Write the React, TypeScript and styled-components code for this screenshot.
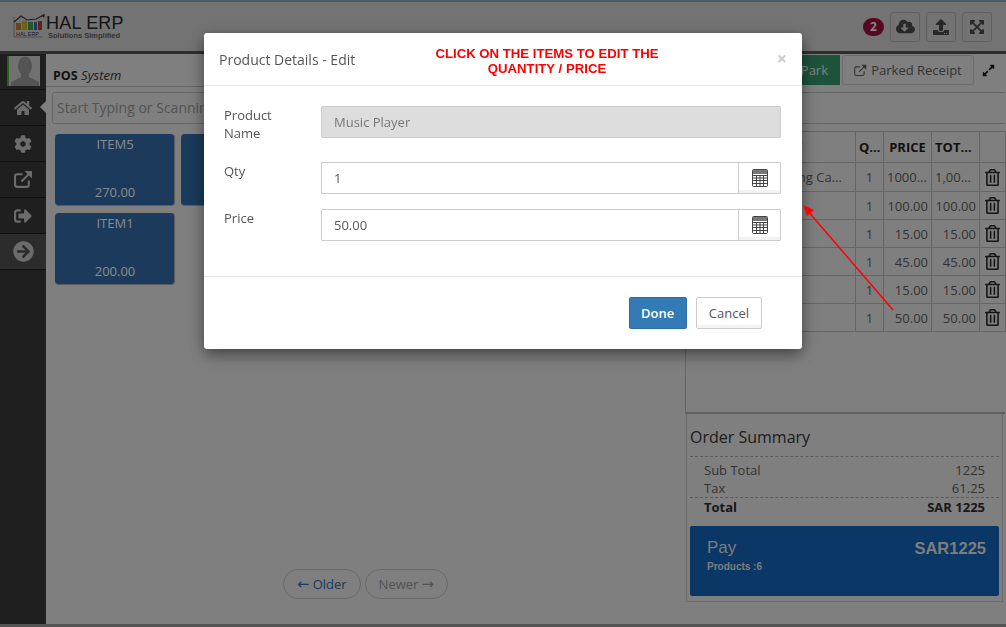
import React from 'react'
import styled, { createGlobalStyle } from 'styled-components'
import {
  FaHome,
  FaCog,
  FaSignOutAlt,
  FaArrowCircleRight,
  FaCloudDownloadAlt,
  FaUpload,
  FaExpandArrowsAlt,
  FaExpandAlt,
  FaRegTrashAlt,
} from 'react-icons/fa'

const GlobalStyle = createGlobalStyle`
  html, body {
    margin: 0;
    padding: 0;
    overflow: hidden;
  }
  body {
    font-family: "Open Sans", "Liberation Sans", sans-serif;
    font-size: 13px;
    color: #555;
    background: #d4d4d4;
  }
  * {
    box-sizing: border-box;
  }
`

const Page = styled.div`
  width: 1006px;
  height: 627px;
  display: flex;
  flex-direction: column;
  border-top: 2px solid #7a9aaa;
  border-bottom: 3px solid #8c8c8c;
`

const Header = styled.header`
  height: 52px;
  flex: none;
  display: flex;
  align-items: center;
  padding: 0 14px 0 13px;
  border-bottom: 3px solid #4c4c4c;
  background: #c0c0c0;
`

const Logo = styled.div`
  display: flex;
  align-items: flex-start;
`

const LogoText = styled.div`
  display: flex;
  flex-direction: column;
  font-family: "Liberation Sans", sans-serif;
  color: #222;
`

const LogoName = styled.span`
  font-size: 18px;
  line-height: 18px;
  letter-spacing: 0.2px;
`

const LogoTag = styled.span`
  font-size: 7.5px;
  line-height: 8px;
  font-weight: 700;
  margin-left: 2px;
  color: #555;
`

const HeaderActions = styled.div`
  margin-left: auto;
  display: flex;
  align-items: center;
  gap: 6px;
`

const Badge = styled.span`
  width: 21px;
  height: 18px;
  border-radius: 9px;
  background: #8e1038;
  color: #ddd;
  font-size: 12px;
  font-weight: 700;
  line-height: 18px;
  text-align: center;
`

const HeaderButton = styled.div`
  width: 30px;
  height: 30px;
  display: flex;
  align-items: center;
  justify-content: center;
  border: 1px solid #a0a0a0;
  border-radius: 3px;
  color: #444;
  font-size: ${({ $size }: { $size?: number }) => $size ?? 16}px;
`

const Body = styled.div`
  flex: 1;
  min-height: 0;
  display: flex;
`

const Sidebar = styled.nav`
  width: 46px;
  flex: none;
  background: #343434;
`

const AvatarBox = styled.div`
  height: 36px;
  padding: 2px 6px 0 7px;
  border-bottom: 1px solid #1c1c1c;
`

const Avatar = styled.div`
  width: 33px;
  height: 30px;
  border-left: 2px solid #3fa52a;
  background: #bdbdbd;
  overflow: hidden;
  svg {
    display: block;
  }
`

const NavItem = styled.div<{ $active?: boolean; $light?: boolean }>`
  position: relative;
  height: 36px;
  display: flex;
  align-items: center;
  justify-content: center;
  font-size: 18px;
  color: #b4b4b4;
  background: ${({ $light }) => ($light ? '#4a4a4a' : 'transparent')};
  border-bottom: 1px solid #1c1c1c;
  &::after {
    content: '';
    display: ${({ $active }) => ($active ? 'block' : 'none')};
    position: absolute;
    right: 0;
    top: 11px;
    border: 6px solid transparent;
    border-right-color: #d4d4d4;
    border-left-width: 0;
  }
`

const Main = styled.main`
  flex: 1;
  min-width: 0;
  display: flex;
  flex-direction: column;
  padding-bottom: 25px;
`

const MainTitle = styled.div`
  height: 33px;
  padding: 12px 0 0 7px;
  border-bottom: 1px solid #aaa;
  line-height: 18px;
  color: #333;
  b {
    font-size: 12.5px;
    color: #1c1c1c;
  }
  i {
    font-size: 13px;
  }
`

const SearchBox = styled.div`
  height: 32px;
  margin: 5px 6px 0;
  padding: 0 4px;
  border: 1px solid #aaa;
  border-radius: 3px;
  font-size: 14px;
  line-height: 30px;
  color: #8a8a8a;
  white-space: nowrap;
  overflow: hidden;
`

const Tiles = styled.div`
  width: 252px;
  margin: 10px 0 0 9px;
  display: flex;
  flex-wrap: wrap;
  gap: 7px 6px;
`

const Tile = styled.div`
  width: 120px;
  height: 72px;
  padding: 1px 3px 4px 4px;
  display: flex;
  flex-direction: column;
  justify-content: space-between;
  border-radius: 4px;
  border: 1px solid #9a9a9a;
  border-width: 0 1px 1px 0;
  background: #2d6199;
  color: #e4e4e4;
  text-align: center;
  line-height: 18px;
`

const Pager = styled.div`
  margin-top: auto;
  display: flex;
  justify-content: center;
  gap: 4px;
`

const PagerLink = styled.span<{ $disabled?: boolean }>`
  height: 30px;
  padding: 0 13px;
  border: 1px solid #b0b0b0;
  border-radius: 15px;
  line-height: 28px;
  white-space: nowrap;
  color: ${({ $disabled }) => ($disabled ? '#888' : '#2d6199')};
`

const PagerArrow = styled.span`
  font-family: "DejaVu Sans", sans-serif;
  font-size: 14.5px;
`

const Side = styled.aside`
  width: 320px;
  flex: none;
  margin-right: 1px;
  display: flex;
  flex-direction: column;
`

const SideActions = styled.div`
  height: 32px;
  flex: none;
  padding-top: 1px;
  display: flex;
  align-items: flex-start;
`

const ParkButton = styled.div`
  width: 155px;
  flex: none;
  height: 30px;
  padding-right: 12px;
  background: #2f8a62;
  color: #d8d8d8;
  text-align: right;
  line-height: 30px;
`

const ParkedButton = styled.div`
  width: 132px;
  flex: none;
  height: 30px;
  margin-left: 2px;
  display: flex;
  align-items: center;
  justify-content: center;
  gap: 4px;
  border: 1px solid #b4b4b4;
  border-radius: 3px;
  color: #555;
`

const ExpandButton = styled.div`
  flex: 1;
  height: 30px;
  padding-right: 2px;
  display: flex;
  align-items: center;
  justify-content: center;
  font-size: 13px;
  color: #111;
`

const CustomerBox = styled.div`
  height: 32px;
  flex: none;
  margin-top: 6px;
  border: 1px solid #aaa;
  border-width: 1px 0;
`

const ItemsPanel = styled.div`
  flex: 1;
  margin-top: 7px;
  border-left: 1px solid #a8a8a8;
  border-bottom: 2px solid #a0a0a0;
`

const ItemsTable = styled.table`
  width: 100%;
  table-layout: fixed;
  border-collapse: collapse;
`

const HeadCell = styled.th`
  height: 31px;
  padding: 0 3px;
  border: 1px solid #a8a8a8;
  color: #1c1c1c;
  font-size: 13px;
  font-weight: 700;
  white-space: nowrap;
  overflow: hidden;
  text-overflow: ellipsis;
`

const Cell = styled.td<{ $align?: string }>`
  height: 28px;
  padding: 0 3px;
  border: 1px solid #a8a8a8;
  text-align: ${({ $align }) => $align ?? 'right'};
  white-space: nowrap;
  overflow: hidden;
  text-overflow: ellipsis;
  tr:first-child > & {
    height: 29px;
  }
  svg {
    display: block;
    margin: 0 auto;
    color: #222;
    font-size: 17px;
  }
`

const Summary = styled.section`
  height: 188px;
  flex: none;
  margin: 0 2px 22px 1px;
  padding: 0 3px;
  border: 1px solid #b4b4b4;
  border-top: 0;
  display: flex;
  flex-direction: column;
`

const SummaryTitle = styled.h3`
  margin: 0 0 4px;
  height: 43px;
  padding-top: 12px;
  font-size: 16px;
  line-height: 22px;
  font-weight: 400;
  color: #333;
  border-bottom: 1px dashed #999;
`

const SummaryRow = styled.div<{ $total?: boolean }>`
  height: ${({ $total }) => ($total ? 19 : 18)}px;
  padding: 0 14px;
  display: flex;
  justify-content: space-between;
  line-height: 18px;
  font-weight: ${({ $total }) => ($total ? 700 : 400)};
  color: ${({ $total }) => ($total ? '#2a2a2a' : '#555')};
  border-top: ${({ $total }) => ($total ? '1px dashed #999' : '0')};
`

const PayButton = styled.div`
  height: 70px;
  margin-top: 10px;
  padding: 10px 13px 0 17px;
  border-radius: 2px;
  background: #115ca8;
  color: #d0d0d0;
  font-family: "Liberation Sans", sans-serif;
`

const PayTop = styled.div`
  display: flex;
  justify-content: space-between;
  font-size: 17px;
  line-height: 24px;
  b {
    font-size: 16.5px;
  }
`

const PayCount = styled.div`
  margin-top: 1px;
  font-size: 10px;
  font-weight: 700;
  line-height: 12px;
`

const Backdrop = styled.div`
  position: fixed;
  inset: 0;
  background: rgba(0, 0, 0, 0.4);
`

const Modal = styled.div`
  position: relative;
  width: 598px;
  height: 316px;
  margin: 33px auto 0;
  border-radius: 3px;
  background: #fff;
  box-shadow: 0 5px 15px rgba(0, 0, 0, 0.5);
  color: #555;
`

const ModalHeader = styled.div`
  height: 53px;
  padding: 0 15px;
  display: flex;
  align-items: center;
  justify-content: space-between;
  border-bottom: 1px solid #e5e5e5;
`

const ModalTitle = styled.span`
  font-size: 14px;
`

const Close = styled.span`
  margin-top: -2px;
  font-size: 18px;
  font-weight: 700;
  color: #ccc;
`

const Note = styled.div`
  position: absolute;
  left: 215px;
  top: 13px;
  width: 256px;
  font-family: "Liberation Sans", sans-serif;
  font-size: 13.2px;
  font-weight: 700;
  line-height: 15px;
  text-align: center;
  color: #f00;
`

const ModalBody = styled.div`
  height: 191px;
  padding: 20px 21px 0 20px;
  border-bottom: 1px solid #e5e5e5;
`

const FormRow = styled.div<{ $tall?: boolean }>`
  display: grid;
  grid-template-columns: 97px 1fr;
  min-height: ${({ $tall }) => ($tall ? '41px' : '32px')};
  margin-bottom: 15px;
  line-height: 18px;
`

const RowLabel = styled.label`
  width: 60px;
`

const InputGroup = styled.div`
  height: 32px;
  display: flex;
  border: 1px solid #ccc;
  border-radius: 1px;
`

const InputValue = styled.div<{ $disabled?: boolean }>`
  flex: 1;
  padding: 0 12px;
  line-height: 30px;
  color: ${({ $disabled }) => ($disabled ? '#777' : '#555')};
  background: ${({ $disabled }) => ($disabled ? '#ddd' : '#fff')};
`

const Addon = styled.div`
  width: 42px;
  display: flex;
  align-items: center;
  justify-content: center;
  border-left: 1px solid #ccc;
  box-shadow: inset 0 -3px 0 #f3f3f3;
  color: #444;
`

const ModalFooter = styled.div`
  padding: 20px 40px 0 0;
  display: flex;
  justify-content: flex-end;
  gap: 9px;
`

const Button = styled.div<{ $primary?: boolean }>`
  height: 32px;
  padding: 0 ${({ $primary }) => ($primary ? 11.5 : 12)}px;
  line-height: 30px;
  border: 1px solid ${({ $primary }) => ($primary ? '#2e6da4' : '#ccc')};
  border-radius: 2px;
  background: ${({ $primary }) => ($primary ? '#337ab7' : '#fff')};
  box-shadow: ${({ $primary }) => ($primary ? 'none' : 'inset 0 -3px 0 #f3f3f3')};
  color: ${({ $primary }) => ($primary ? '#fff' : '#555')};
  font-weight: ${({ $primary }) => ($primary ? 600 : 400)};
`

const ArrowLayer = styled.svg`
  position: fixed;
  left: 0;
  top: 0;
  pointer-events: none;
`

const LogoMark = () => (
  <svg width="33" height="24" viewBox="0 0 33 24">
    <path d="M1 3v20h29" fill="none" stroke="#777" strokeWidth="0.8" />
    <rect x="3" y="9" width="5" height="7" fill="#b5702a" />
    <rect x="9" y="7" width="5" height="9" fill="#b5a52a" />
    <rect x="15" y="8" width="5" height="8" fill="#3f8f4a" />
    <rect x="21" y="8" width="3" height="8" fill="#2d6199" />
    <rect x="25" y="7" width="4" height="9" fill="#a33" />
    <path d="M1 8 8 2l6 4 9-1 6-3" fill="none" stroke="#333" strokeWidth="1.2" />
    <path d="M32 0l-1 4-3-3z" fill="#333" />
    <text x="3" y="21.5" fontFamily="Liberation Sans" fontSize="5.4" fill="#333">
      HAL ERP
    </text>
  </svg>
)

const Silhouette = () => (
  <svg width="31" height="30" viewBox="0 0 31 30">
    <ellipse cx="16" cy="10" rx="7" ry="9.5" fill="#8c8c8c" />
    <path d="M12 17h8v4l10 5v4H2v-4l10-5z" fill="#8c8c8c" />
  </svg>
)

const ExternalLinkIcon = ({ size, weight }: { size: number; weight: number }) => (
  <svg width={size} height={size} viewBox="0 0 18 18">
    <path
      d="M14 10v4a2 2 0 0 1-2 2H3a2 2 0 0 1-2-2V6a2 2 0 0 1 2-2h5"
      fill="none"
      stroke="currentColor"
      strokeWidth={weight}
    />
    <path d="M7 11l8-8" fill="none" stroke="currentColor" strokeWidth={weight} />
    <path d="M10 1h7v7z" fill="currentColor" />
  </svg>
)

const CalculatorIcon = () => (
  <svg width="16" height="18" viewBox="0 0 16 18">
    <rect x="0.5" y="0.5" width="15" height="17" rx="1" fill="none" stroke="#444" />
    <rect x="1" y="1" width="14" height="4" fill="#777" />
    <path
      d="M1 6.5h14M1 9h14M1 11.5h14M1 14.5h14M4.5 6v11M8 6v11M11.5 6v11"
      stroke="#444"
      strokeWidth="1"
      fill="none"
    />
  </svg>
)

const rows = [
  { name: 'Canon Ultra Gaming Camera', price: '1000.00', total: '1,000.00' },
  { name: 'Laptop', price: '100.00', total: '100.00' },
  { name: 'Mouse', price: '15.00', total: '15.00' },
  { name: 'Keyboard', price: '45.00', total: '45.00' },
  { name: 'Cable', price: '15.00', total: '15.00' },
  { name: 'Music Player', price: '50.00', total: '50.00' },
]

export default function App() {
  return (
    <>
      <GlobalStyle />
      <Page>
        <Header>
          <Logo>
            <LogoMark />
            <LogoText>
              <LogoName>HAL ERP</LogoName>
              <LogoTag>Solutions Simplified</LogoTag>
            </LogoText>
          </Logo>
          <HeaderActions>
            <Badge>2</Badge>
            <HeaderButton $size={19}>
              <FaCloudDownloadAlt />
            </HeaderButton>
            <HeaderButton>
              <FaUpload />
            </HeaderButton>
            <HeaderButton>
              <FaExpandArrowsAlt />
            </HeaderButton>
          </HeaderActions>
        </Header>
        <Body>
          <Sidebar>
            <AvatarBox>
              <Avatar>
                <Silhouette />
              </Avatar>
            </AvatarBox>
            <NavItem $active>
              <FaHome />
            </NavItem>
            <NavItem>
              <FaCog />
            </NavItem>
            <NavItem>
              <ExternalLinkIcon size={19} weight={2} />
            </NavItem>
            <NavItem>
              <FaSignOutAlt />
            </NavItem>
            <NavItem $light>
              <FaArrowCircleRight style={{ fontSize: 21 }} />
            </NavItem>
          </Sidebar>
          <Main>
            <MainTitle>
              <b>POS</b> <i>System</i>
            </MainTitle>
            <SearchBox>Start Typing or Scanning Barcode...</SearchBox>
            <Tiles>
              <Tile>
                <span>ITEM5</span>
                <span>270.00</span>
              </Tile>
              <Tile>
                <span>ITEM4</span>
                <span>150.00</span>
              </Tile>
              <Tile>
                <span>ITEM1</span>
                <span>200.00</span>
              </Tile>
            </Tiles>
            <Pager>
              <PagerLink>
                <PagerArrow>←</PagerArrow> Older
              </PagerLink>
              <PagerLink $disabled>
                Newer <PagerArrow>→</PagerArrow>
              </PagerLink>
            </Pager>
          </Main>
          <Side>
            <SideActions>
              <ParkButton>Park</ParkButton>
              <ParkedButton>
                <ExternalLinkIcon size={13} weight={1.5} />
                Parked Receipt
              </ParkedButton>
              <ExpandButton>
                <FaExpandAlt />
              </ExpandButton>
            </SideActions>
            <CustomerBox />
            <ItemsPanel>
              <ItemsTable>
                <colgroup>
                  <col style={{ width: 169 }} />
                  <col style={{ width: 28 }} />
                  <col style={{ width: 48 }} />
                  <col style={{ width: 48 }} />
                  <col style={{ width: 26 }} />
                </colgroup>
                <thead>
                  <tr>
                    <HeadCell>PRODUCT</HeadCell>
                    <HeadCell>QTY</HeadCell>
                    <HeadCell>PRICE</HeadCell>
                    <HeadCell>TOTAL</HeadCell>
                    <HeadCell />
                  </tr>
                </thead>
                <tbody>
                  {rows.map((row) => (
                    <tr key={row.name}>
                      <Cell $align='left'>{row.name}</Cell>
                      <Cell $align='center'>1</Cell>
                      <Cell>{row.price}</Cell>
                      <Cell>{row.total}</Cell>
                      <Cell>
                        <FaRegTrashAlt />
                      </Cell>
                    </tr>
                  ))}
                </tbody>
              </ItemsTable>
            </ItemsPanel>
            <Summary>
              <SummaryTitle>Order Summary</SummaryTitle>
              <SummaryRow>
                <span>Sub Total</span>
                <span>1225</span>
              </SummaryRow>
              <SummaryRow>
                <span>Tax</span>
                <span>61.25</span>
              </SummaryRow>
              <SummaryRow $total>
                <span>Total</span>
                <span>SAR 1225</span>
              </SummaryRow>
              <PayButton>
                <PayTop>
                  <span>Pay</span>
                  <b>SAR1225</b>
                </PayTop>
                <PayCount>Products :6</PayCount>
              </PayButton>
            </Summary>
          </Side>
        </Body>
      </Page>
      <Backdrop>
        <Modal>
          <ModalHeader>
            <ModalTitle>Product Details - Edit</ModalTitle>
            <Close>×</Close>
          </ModalHeader>
          <Note>
            CLICK ON THE ITEMS TO EDIT THE
            <br />
            QUANTITY / PRICE
          </Note>
          <ModalBody>
            <FormRow $tall>
              <RowLabel>Product Name</RowLabel>
              <InputGroup>
                <InputValue $disabled>Music Player</InputValue>
              </InputGroup>
            </FormRow>
            <FormRow>
              <RowLabel>Qty</RowLabel>
              <InputGroup>
                <InputValue>1</InputValue>
                <Addon>
                  <CalculatorIcon />
                </Addon>
              </InputGroup>
            </FormRow>
            <FormRow>
              <RowLabel>Price</RowLabel>
              <InputGroup>
                <InputValue>50.00</InputValue>
                <Addon>
                  <CalculatorIcon />
                </Addon>
              </InputGroup>
            </FormRow>
          </ModalBody>
          <ModalFooter>
            <Button $primary>Done</Button>
            <Button>Cancel</Button>
          </ModalFooter>
        </Modal>
      </Backdrop>
      <ArrowLayer width="1006" height="627" viewBox="0 0 1006 627">
        <line x1="893" y1="310" x2="807" y2="210" stroke="#f00" strokeWidth="1.5" />
        <path d="M803 205l11 5-7 6z" fill="#f00" />
      </ArrowLayer>
    </>
  )
}
